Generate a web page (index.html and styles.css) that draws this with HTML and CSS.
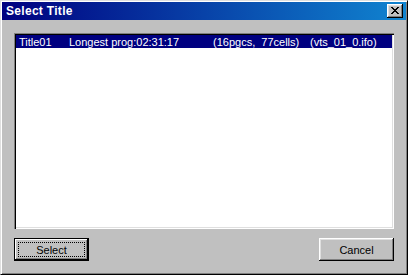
FILE: index.html
```html
<!DOCTYPE html>
<html lang="en">
<head>
    <meta charset="UTF-8">
    <title>Select Title</title>
    <link rel="stylesheet" href="styles.css">
</head>
<body>
    <div class="window">
        <div class="titlebar">
            <span class="caption">Select Title</span>
            <button class="close-btn" aria-label="Close">
                <svg width="8" height="7" viewBox="0 0 8 7" shape-rendering="crispEdges">
                    <path d="M0 0h2v1h-2zM6 0h2v1h-2zM1 1h2v1h-2zM5 1h2v1h-2zM2 2h4v1h-4zM3 3h2v1h-2zM2 4h4v1h-4zM1 5h2v1h-2zM5 5h2v1h-2zM0 6h2v1h-2zM6 6h2v1h-2z" fill="#000"/>
                </svg>
            </button>
        </div>

        <div class="content">
            <div class="listbox">
                <div class="list-row selected">
                    <span class="col col-title">Title01</span>
                    <span class="col col-prog">Longest prog:02:31:17</span>
                    <span class="col col-cells">(16pgcs,  77cells)</span>
                    <span class="col col-file">(vts_01_0.ifo)</span>
                </div>
            </div>

            <div class="buttons">
                <button class="btn btn-default"><span class="focus">Select</span></button>
                <button class="btn">Cancel</button>
            </div>
        </div>
    </div>
</body>
</html>
```

FILE: styles.css
```css
body {
    margin: 0;
    padding: 0;
    background-color: #c0c0c0;
    font-family: 'Liberation Sans', Arial, sans-serif;
    font-size: 11px;
}

.window {
    width: 408px;
    height: 275px;
    box-sizing: border-box;
    background-color: #c0c0c0;
    border: 1px solid;
    border-color: #dfdfdf #000 #000 #dfdfdf;
    box-shadow: inset 1px 1px #fff, inset -1px -1px #808080;
    padding: 1px;
    display: flex;
    flex-direction: column;
}

.titlebar {
    height: 18px;
    display: flex;
    align-items: center;
    justify-content: space-between;
    background: linear-gradient(to right, #000080, #1084d0);
    padding: 0 3px 0 4px;
}

.caption {
    color: #fff;
    font-weight: bold;
    font-size: 12px;
    letter-spacing: 0.3px;
}

.close-btn {
    width: 16px;
    height: 14px;
    padding: 0;
    margin: 0;
    display: flex;
    align-items: center;
    justify-content: center;
    background-color: #c0c0c0;
    border: none;
    box-shadow: inset -1px -1px #000, inset 1px 1px #fff, inset -2px -2px #808080, inset 2px 2px #dfdfdf;
}

.close-btn svg {
    display: block;
    margin-left: -1px;
    margin-top: -1px;
}

.content {
    flex: 1;
    display: flex;
    flex-direction: column;
    padding: 13px 12px 12px 12px;
}

.listbox {
    height: 196px;
    box-sizing: border-box;
    background-color: #fff;
    box-shadow: inset 1px 1px #808080, inset 2px 2px #000, inset -1px -1px #fff, inset -2px -2px #dfdfdf;
    padding: 2px;
}

.list-row {
    height: 13px;
    display: flex;
    align-items: center;
    white-space: pre;
    padding-left: 3px;
}

.list-row.selected {
    background-color: #000080;
    color: #fff;
}

.col {
    flex-shrink: 0;
}

.col-title { width: 50px; }
.col-prog { width: 144px; }
.col-cells { width: 97px; }

.buttons {
    margin-top: 9px;
    display: flex;
    justify-content: space-between;
}

.btn {
    width: 75px;
    height: 23px;
    padding: 0;
    background-color: #c0c0c0;
    border: none;
    font-family: 'Liberation Sans', Arial, sans-serif;
    font-size: 11px;
    color: #000;
    box-shadow: inset -1px -1px #000, inset 1px 1px #fff, inset -2px -2px #808080, inset 2px 2px #dfdfdf;
}

.btn-default {
    box-shadow: inset 0 0 0 1px #000, inset -2px -2px #000, inset 2px 2px #fff, inset -3px -3px #808080;
    display: flex;
    padding: 4px;
}

.focus {
    flex: 1;
    display: flex;
    align-items: center;
    justify-content: center;
    border: 1px dotted #000;
}
```
